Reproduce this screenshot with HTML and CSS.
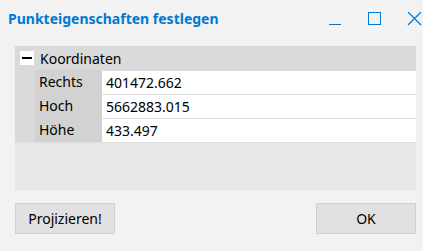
FILE: index.html
```html
<!DOCTYPE html>
<html lang="de">
<head>
    <meta charset="UTF-8">
    <title>Punkteigenschaften festlegen</title>
    <link rel="stylesheet" href="styles.css">
</head>
<body>
    <!-- Title bar -->
    <div class="titlebar">
        <span class="title">Punkteigenschaften festlegen</span>
        <div class="controls">
            <svg class="ctl" width="14" height="14" viewBox="0 0 14 14">
                <line x1="2" y1="12.5" x2="14" y2="12.5" stroke="#0078d7" stroke-width="1"/>
            </svg>
            <svg class="ctl" width="14" height="14" viewBox="0 0 14 14">
                <rect x="1.5" y="0.5" width="12" height="12" fill="none" stroke="#0078d7" stroke-width="1"/>
            </svg>
            <svg class="ctl" width="15" height="14" viewBox="0 0 15 14">
                <line x1="1" y1="0" x2="14" y2="13" stroke="#0078d7" stroke-width="1.2"/>
                <line x1="14" y1="0" x2="1" y2="13" stroke="#0078d7" stroke-width="1.2"/>
            </svg>
        </div>
    </div>

    <!-- Property grid -->
    <div class="grid">
        <div class="group">
            <span class="toggle"><span class="minus"></span></span>
            <span>Koordinaten</span>
        </div>
        <div class="row">
            <div class="indent"></div>
            <div class="label">Rechts</div>
            <div class="value">401472.662</div>
        </div>
        <div class="row">
            <div class="indent"></div>
            <div class="label">Hoch</div>
            <div class="value">5662883.015</div>
        </div>
        <div class="row">
            <div class="indent"></div>
            <div class="label">Höhe</div>
            <div class="value">433.497</div>
        </div>
        <div class="filler"></div>
    </div>

    <!-- Buttons -->
    <div class="buttons">
        <button class="btn">Projizieren!</button>
        <button class="btn">OK</button>
    </div>
</body>
</html>
```

FILE: styles.css
```css
body {
    margin: 0;
    background-color: #f2f2f2;
    font-family: "Noto Sans", "Open Sans", sans-serif;
    font-size: 14px;
    color: #000;
}

.titlebar {
    display: flex;
    align-items: center;
    justify-content: space-between;
    height: 37px;
    padding-left: 8px;
}

.title {
    color: #0078d7;
    font-weight: bold;
    font-size: 14px;
}

.controls {
    display: flex;
    align-items: center;
    gap: 26px;
    padding-right: 1px;
    margin-top: 1px;
}

.ctl {
    display: block;
}

.grid {
    margin: 9px 7px 0 15px;
    background-color: #dadada;
}

.group {
    display: flex;
    align-items: center;
    height: 24px;
    padding-left: 5px;
}

.toggle {
    display: flex;
    align-items: center;
    justify-content: center;
    width: 14px;
    height: 14px;
    background-color: #fff;
    margin-right: 6px;
}

.minus {
    width: 10px;
    height: 2px;
    background-color: #000;
}

.row {
    display: flex;
    height: 24px;
}

.indent {
    width: 20px;
    background-color: #dadada;
}

.label {
    width: 63px;
    padding-left: 4px;
    background-color: #d2d2d2;
    line-height: 24px;
}

.value {
    flex: 1;
    background-color: #fff;
    border-top: 1px solid #dfdfdf;
    padding-left: 4px;
    line-height: 23px;
}

.filler {
    height: 47px;
    background-color: #e7e7e7;
    border-top: 1px solid #dfdfdf;
}

.buttons {
    display: flex;
    justify-content: space-between;
    margin: 13px 7px 0 15px;
}

.btn {
    width: 100px;
    height: 31px;
    background-color: #e1e1e1;
    border: 1px solid #d0d0d0;
    font-family: "Noto Sans", "Open Sans", sans-serif;
    font-size: 14px;
    color: #000;
    padding: 0;
}
```
